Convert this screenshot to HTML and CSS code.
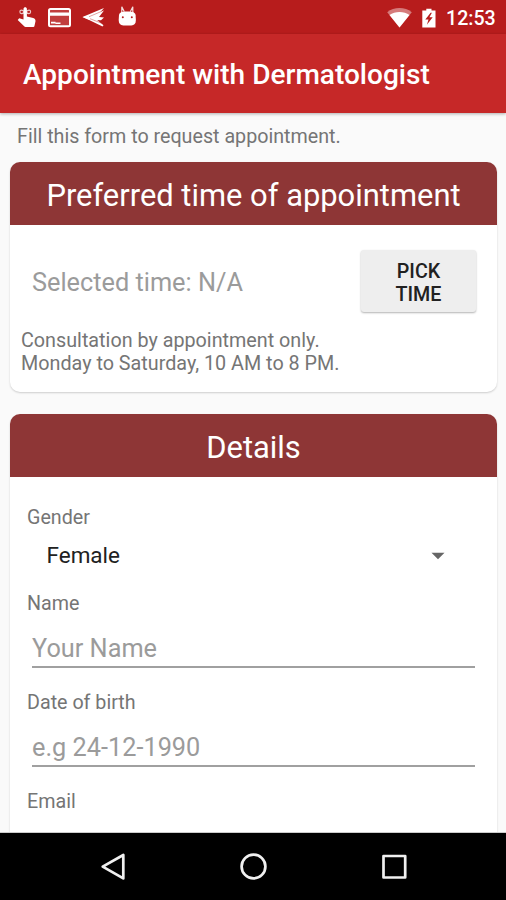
FILE: index.html
```html
<!DOCTYPE html>
<html lang="en">
<head>
<meta charset="utf-8">
<title>Appointment with Dermatologist</title>
<link rel="stylesheet" href="styles.css">
</head>
<body>
<div class="screen">
  <div class="status">
    <svg class="notices" width="140" height="34" viewBox="0 0 140 34" fill="#fff">
      <path d="M23.500 8.800c0-2.200 3.400-2.200 3.400 0v7.600l6.300 1.600c1.700.5 2.500 1.600 2.300 3.300l-1 4.400c-.2 1-.7 1.400-1.700 1.400h-6.600c-1 0-1.600-.3-2.300-1l-6.200-6.200 1.500-1.700 4.300 1.200z"/>
      <path d="M24.500 12c-2-2.600-4.600-2.400-4.600-.2s2.600 2.600 4.600.2zM26 12c2-2.600 4.600-2.400 4.600-.2s-2.600 2.600-4.600.2z" fill="none" stroke="#fff" stroke-opacity=".75" stroke-width="1.200"/>
      <rect x="49" y="8.900" width="21" height="17.400" rx="1.500" fill="#fff" fill-opacity=".15" stroke="#fff" stroke-width="2"/>
      <path d="M49 12.500h21v3.300H49zM51 21.700h4.500v1.800H51zM55.500 22.500h5V24h-5z"/>
      <path d="M82.500 17 104 8l-6.500 7.500-10 2z"/>
      <path d="M82.500 17.200 104 10.600l-5 6.400 5 .500-3 2.800-12-.6z"/>
      <path d="M84 17.500l11 .8 8.500 6.900-1 1.200z"/>
      <path d="M89 16.700 102.500 11M90 18.700l11.500 4.500" fill="none" stroke="#b71c1c" stroke-opacity=".6" stroke-width=".7"/>
      <path d="M119 15.200c.3-2.600 2.400-3.700 8.300-3.700s8 1.100 8.300 3.700l.3 4.800c0 3.700-1.600 5.400-4.600 5.400h-8c-3 0-4.600-1.700-4.600-5.400z"/>
      <path d="M121.800 13.500V6.700l2.500 5M132.800 13.500V6.700l-2.500 5" fill="none" stroke="#fff" stroke-opacity=".85" stroke-width="1.200"/>
      <circle cx="122.800" cy="17.300" r="1" fill="#b71c1c"/><circle cx="131.800" cy="17.300" r="1" fill="#b71c1c"/>
    </svg>
    <svg class="signals" width="54" height="34" viewBox="0 0 54 34">
      <path d="M1.200 12.200C8 6.700 19 6.700 25.800 12.200L13.500 27.400z" fill="#fff" fill-opacity=".42"/>
      <path d="M3.500 14.900c5.500-4 14.500-4 20 0l-10 12.500z" fill="#fff"/>
      <path d="M36.300 10.400h4v-1.700h5.200v1.700h4v17H36.300z" fill="#fff"/>
      <path d="M44.600 12.800l-5.300 6.700h3.200l-1.600 5.300 5.800-7.500h-3.300l2.500-4.500z" fill="#b71c1c"/>
    </svg>
    <span class="clock">12:53</span>
  </div>
  <header class="toolbar"><h1>Appointment with Dermatologist</h1></header>
  <main class="content">
    <p class="intro">Fill this form to request appointment.</p>
    <section class="card time-card">
      <h2>Preferred time of appointment</h2>
      <div class="time-row">
        <span class="selected">Selected time: N/A</span>
        <button class="pick">PICK<br>TIME</button>
      </div>
      <p class="note">Consultation by appointment only.<br>Monday to Saturday, 10 AM to 8 PM.</p>
    </section>
    <section class="card details-card">
      <h2>Details</h2>
      <div class="form">
        <div class="label">Gender</div>
        <div class="spinner"><span>Female</span><svg width="14" height="8" viewBox="0 0 14 8"><path d="M.5.700h13L7 7.200z" fill="#666"/></svg></div>
        <div class="label">Name</div>
        <div class="field"><span class="name-hint">Your Name</span></div>
        <div class="label">Date of birth</div>
        <div class="field"><span class="date-hint">e.g 24-12-1990</span></div>
        <div class="label">Email</div>
      </div>
    </section>
  </main>
  <nav class="navbar">
    <svg width="506" height="67" viewBox="0 0 506 67" fill="none" stroke="#f0f0f0" stroke-width="2.700" stroke-linejoin="round">
      <path d="M102.700 33.700 123.300 22v23.400z"/>
      <circle cx="253.500" cy="33.500" r="11.900"/>
      <rect x="383.500" y="23" width="21.700" height="21.500"/>
    </svg>
  </nav>
</div>
</body>
</html>
```
FILE: styles.css
```css
* { box-sizing: border-box; }
body { margin: 0; font-family: Roboto, sans-serif; }
h1, h2, p { margin: 0; font-weight: 400; }
svg { display: block; flex: none; }
.screen { width: 506px; height: 900px; display: flex; flex-direction: column; overflow: hidden; background: #fafafa; }
.status { height: 34px; flex: none; display: flex; background: #b71c1c; }
.signals { margin-left: 246px; }
.clock { margin-left: 6px; color: #fff; font-size: 19.6px; font-weight: 500; line-height: 37px; white-space: nowrap; }
.toolbar { position: relative; height: 79px; flex: none; padding-left: 23px; background: #c62828; box-shadow: 0 1px 3px rgba(0, 0, 0, .3); }
h1 { color: #fff; font-size: 28.05px; font-weight: 500; line-height: 82px; white-space: nowrap; }
.content { height: 720px; flex: none; padding: 0 9px 0 10px; overflow: hidden; border-bottom: 1px solid #ccc; }
.intro { height: 49px; padding-left: 7px; color: #757575; font-size: 19.7px; line-height: 48px; white-space: nowrap; }
.card { background: #fff; border-radius: 10px; box-shadow: 0 1px 2px rgba(0, 0, 0, .18); overflow: hidden; }
.card h2 { height: 63px; color: #fff; background: #8e3636; font-size: 30.9px; line-height: 68px; text-align: center; white-space: nowrap; }
.time-card { height: 230px; margin-bottom: 22px; }
.time-row { display: flex; align-items: center; justify-content: space-between; padding: 25px 21px 0 22px; }
.selected { padding-top: 2px; color: #9b9b9b; font-size: 25.3px; white-space: nowrap; }
.pick { width: 115px; height: 62px; padding: 4px 0 0; border: 0; border-radius: 3px; background: #eee; box-shadow: 0 1px 2px rgba(0, 0, 0, .3); color: #212121; font: 500 19.7px/23px Roboto, sans-serif; }
.note { padding: 17px 0 0 11px; color: #757575; font-size: 19.75px; line-height: 23px; white-space: nowrap; }
.details-card { height: 450px; }
.form { padding: 29px 22px 0 17px; }
.label { height: 23px; color: #757575; font-size: 19.7px; line-height: 23px; }
.spinner { height: 63px; display: flex; align-items: flex-start; justify-content: space-between; padding: 13px 30px 0 19.500px; color: #212121; font-size: 22.5px; line-height: 26px; }
.spinner svg { margin-top: 10px; }
.field { height: 53px; margin: 0 0 23px 5px; padding-top: 19px; border-bottom: 2px solid #a0a0a0; color: #9b9b9b; font-size: 25.3px; line-height: 30px; }
.navbar { height: 67px; flex: none; background: #000; }
```
